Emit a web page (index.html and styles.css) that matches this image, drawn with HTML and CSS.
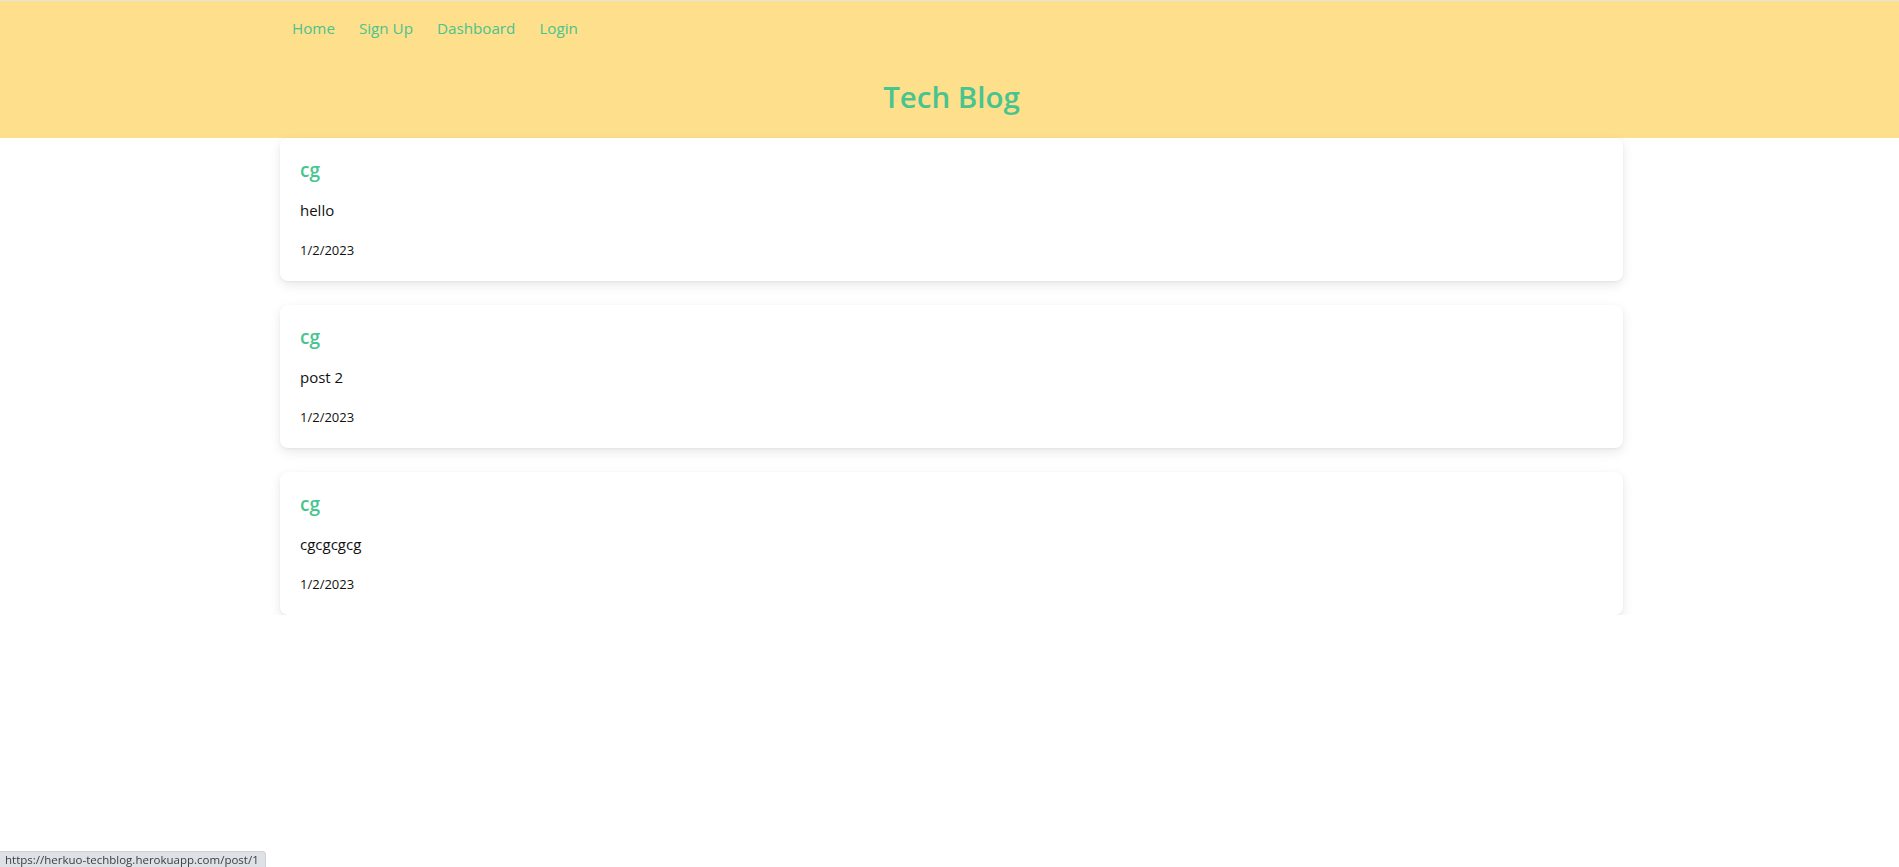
FILE: index.html
```html
<!DOCTYPE html>
<html lang="en">
<head>
<meta charset="utf-8">
<title>Tech Blog</title>
<link rel="stylesheet" href="styles.css">
</head>
<body>
<header class="site-header">
  <div class="container">
    <nav class="nav">
      <a class="nav-link" href="#">Home</a>
      <a class="nav-link" href="#">Sign Up</a>
      <a class="nav-link" href="#">Dashboard</a>
      <a class="nav-link" href="#">Login</a>
    </nav>
    <h1 class="site-title">Tech Blog</h1>
  </div>
</header>
<main class="container posts">
  <article class="post-card">
    <h2 class="post-author">cg</h2>
    <p class="post-body">hello</p>
    <p class="post-date">1/2/2023</p>
  </article>
  <article class="post-card">
    <h2 class="post-author">cg</h2>
    <p class="post-body">post 2</p>
    <p class="post-date">1/2/2023</p>
  </article>
  <article class="post-card">
    <h2 class="post-author">cg</h2>
    <p class="post-body">cgcgcgcg</p>
    <p class="post-date">1/2/2023</p>
  </article>
</main>
<div class="status-bar">https://herkuo-techblog.herokuapp.com/post/1</div>
</body>
</html>
```
FILE: styles.css
```css
* { box-sizing: border-box; }
html, body { margin: 0; padding: 0; }
body {
  font-family: "Open Sans", "Noto Sans", sans-serif;
  background: #ffffff;
  color: #111111;
}
.container {
  width: 1347px;
  padding-left: 4px;
  margin: 0 auto;
}
.site-header {
  background: #fedf8b;
  border-top: 1px solid #e4e4e4;
  padding-top: 15px;
  padding-bottom: 23px;
}
.nav {
  display: flex;
  height: 24px;
  align-items: center;
}
.nav-link {
  color: #48c48f;
  text-decoration: none;
  font-size: 15.2px;
  line-height: 24px;
  padding: 0 12px;
}
.site-title {
  margin: 39px 0 0;
  text-align: center;
  color: #48c48f;
  font-size: 29.5px;
  line-height: 36px;
  font-weight: 600;
}
.posts {
  display: flex;
  flex-direction: column;
  gap: 24px;
}
.post-card {
  background: #fff;
  border-radius: 8px;
  box-shadow: 0 4px 12px rgba(0, 0, 0, 0.09), 0 1px 3px rgba(0, 0, 0, 0.05);
  padding: 18px 20px 20px;
  height: 143px;
}
.post-author {
  margin: 0;
  color: #48c48f;
  font-size: 19px;
  line-height: 28px;
  font-weight: 600;
}
.post-body {
  margin: 14px 0 0;
  font-size: 15px;
  line-height: 24px;
}
.post-date {
  margin: 18px 0 0;
  font-size: 13px;
  line-height: 20px;
}
.status-bar {
  position: fixed;
  left: 0;
  bottom: 0;
  background: #dee1e6;
  color: #3c4043;
  font-family: "Open Sans", sans-serif;
  font-size: 11.5px;
  line-height: 15px;
  padding: 0 6px 0 5px;
  border-top-right-radius: 4px;
  border-top: 1px solid #cfd2d6;
  border-right: 1px solid #cfd2d6;
}
```
